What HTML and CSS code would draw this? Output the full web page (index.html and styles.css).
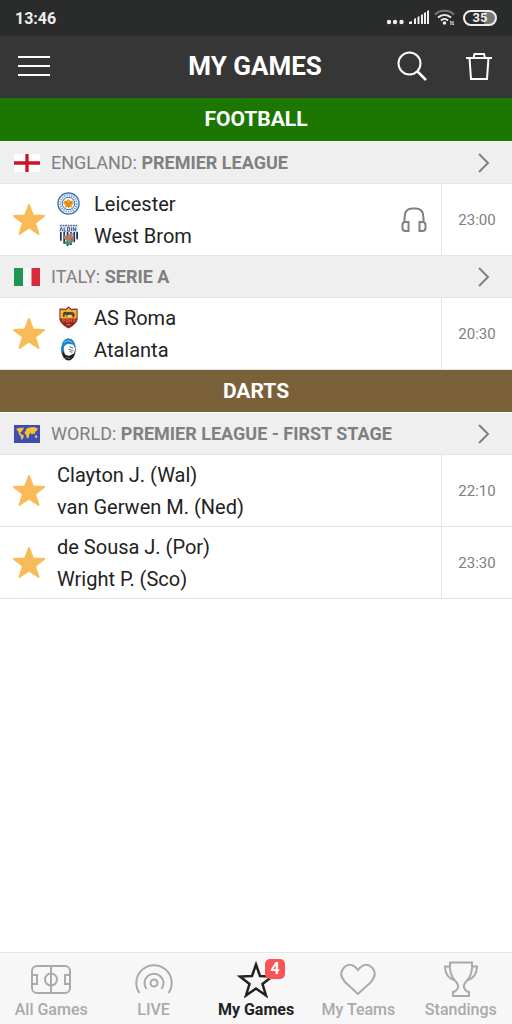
FILE: index.html
```
<!DOCTYPE html>
<html lang="en">
<head>
    <meta charset="UTF-8">
    <meta name="viewport" content="width=device-width, initial-scale=1.0">
    <title>My Games</title>
    <link rel="stylesheet" href="styles.css">
</head>
<body>
    <!-- shared icons -->
    <svg class="sprite" aria-hidden="true">
        <symbol id="star" viewBox="0 0 34 33">
            <path d="M17 2l4 10.500 11 .5-9 7 3.500 11-9.500-6.500L7.500 31 11 20 2 13l11-.5z" fill="#f8bb58" stroke="#f8bb58" stroke-width="2" stroke-linejoin="round"/>
        </symbol>
        <symbol id="chevron" viewBox="0 0 14 22">
            <path d="M2 2l9 9-9 9" fill="none" stroke="#808080" stroke-width="2"/>
        </symbol>
    </svg>

    <div class="app">
        <div class="status">
            <span>13:46</span>
            <div class="status-icons">
                <svg width="18" height="18" viewBox="0 0 18 18" fill="#eee">
                    <circle cx="3" cy="13" r="2.200"/><circle cx="9" cy="13" r="2.200"/><circle cx="15.500" cy="13" r="2.200"/>
                </svg>
                <svg width="22" height="18" viewBox="0 0 22 18" fill="#eee">
                    <path d="M1 15v-2l3-1v3zM6 15v-5l2-1v6zM9.500 15V8l2-1v8zM13 15V6l2-1v10zM16 15V4l2-1v12zM19 15V2l2-1v14z"/>
                </svg>
                <svg width="22" height="18" viewBox="0 0 22 18" fill="none" stroke="#eee" stroke-width="2">
                    <path d="M1 5.500c5-5 14-5 19 0" stroke="#777"/>
                    <path d="M4 8.500c4-3.500 9-3.500 13 0M7 11.500c2-2 5-2 7 0"/>
                    <circle cx="10.500" cy="14" r="1" fill="#eee" stroke-width="1.500"/>
                    <path d="M17 16v-4l-1 1M19 12v4l1-1" stroke-width="1"/>
                </svg>
                <div class="battery">35</div>
            </div>
        </div>

        <header class="header">
            <button class="icon-btn" type="button" aria-label="Menu">
                <svg width="32" height="20" viewBox="0 0 32 20" stroke="#fff" stroke-width="2">
                    <path d="M0 1h32M0 10h32M0 19h32"/>
                </svg>
            </button>
            <h1>MY GAMES</h1>
            <div class="header-actions">
                <button class="icon-btn" type="button" aria-label="Search">
                    <svg width="30" height="30" viewBox="0 0 30 30" fill="none" stroke="#fff" stroke-width="2">
                        <circle cx="12.500" cy="12.500" r="11"/>
                        <path d="M20 20l9 9" stroke-width="2.500"/>
                    </svg>
                </button>
                <button class="icon-btn" type="button" aria-label="Delete">
                    <svg width="26" height="30" viewBox="0 0 26 30" fill="none" stroke="#fff" stroke-width="2">
                        <path d="M0 7h26M7.500 7l1-4h9.500l1 4M3.500 7l1.500 21h16l1.500-21"/>
                    </svg>
                </button>
            </div>
        </header>

        <main>
            <section>
                <h2 class="sport football">FOOTBALL</h2>

                <a class="league" href="#england">
                    <svg class="flag" viewBox="0 0 26 18">
                        <path d="M0 0h26v18H0z" fill="#fff"/>
                        <path d="M13 0v18M0 9h26" stroke="#ce1126" stroke-width="3.300"/>
                    </svg>
                    <span>ENGLAND: <b>PREMIER LEAGUE</b></span>
                    <svg class="chevron"><use href="#chevron"/></svg>
                </a>
                <div class="game">
                    <button class="fav" type="button" aria-label="Remove from my games"><svg><use href="#star"/></svg></button>
                    <div class="teams">
                        <div class="team">
                            <svg class="badge" viewBox="0 0 24 24">
                                <circle cx="12" cy="12" r="11" fill="#fff" stroke="#4777b5" stroke-width="1.500"/>
                                <circle cx="12" cy="12" r="8.500" fill="none" stroke="#7fa2cf" stroke-width="2" stroke-dasharray="1.500 1"/>
                                <circle cx="12" cy="12" r="6.500" fill="#fff" stroke="#2c62aa"/>
                                <path d="M6.500 12l1-3 2.500 0 2-2 2 2 2.500 0 1 3-2 1.500 0 3-2.500-1-1 2-1-2-2.500 1 0-3z" fill="#f49b22"/>
                                <path d="M9 11l2 1M15 11l-2 1M11 14.500h2" stroke="#8b572a"/>
                            </svg>
                            <span>Leicester</span>
                        </div>
                        <div class="team">
                            <svg class="badge" viewBox="0 0 24 24">
                                <path d="M2.500 1h19v14q-1 5-9.500 8.500Q3.500 20 2.500 15z" fill="#fff"/>
                                <path d="M4 8v9.500M7.500 8v12.500M11 8v15M14.500 8v14M18 8v11M21 8v8" stroke="#17346b" stroke-width="1.800"/>
                                <path d="M2.500 1h19v7h-19z" fill="#e6eaf3"/>
                                <path d="M3 1.500h18" stroke="#5b70a0" stroke-width="1.500" stroke-dasharray="2 .7"/>
                                <path d="M3 7.500l1.500-4L6 7.500M7.500 3.500v4h2M11 3.500v4h2v-4zM15 3.500v4M17 7.500v-4l2.500 4v-4" stroke="#2a437a" stroke-width=".9" fill="none"/>
                                <path d="M6 12l5 0 3-3 3 1-1 2 2 3-3 4-4-1-4-3z" fill="#b08066"/>
                                <path d="M8 18l4 1 4-2v3l-4 2.500-4-2z" fill="#3c9b69"/>
                                <path d="M15 15l1.500 3" stroke="#c9473f" stroke-width="1.500"/>
                            </svg>
                            <span>West Brom</span>
                        </div>
                    </div>
                    <svg class="audio" viewBox="0 0 26 26" fill="none" stroke="#808080" stroke-width="2">
                        <path d="M3.500 15v-4Q3.500 1.500 11 1.500h4q7.500 0 7.500 9.500v4"/>
                        <path d="M7.500 15v9H4.500q-3 0-3-3v-3q0-3 3-3zM18.500 15v9h3q3 0 3-3v-3q0-3-3-3z"/>
                    </svg>
                    <time class="time">23:00</time>
                </div>

                <a class="league" href="#italy">
                    <svg class="flag" viewBox="0 0 26 18">
                        <path d="M0 0h26v18H0z" fill="#f8f8f8"/>
                        <path d="M0 0h9v18H0z" fill="#1d9655"/>
                        <path d="M17.500 0H26v18h-8.500z" fill="#d52b3a"/>
                    </svg>
                    <span>ITALY: <b>SERIE A</b></span>
                    <svg class="chevron"><use href="#chevron"/></svg>
                </a>
                <div class="game">
                    <button class="fav" type="button" aria-label="Remove from my games"><svg><use href="#star"/></svg></button>
                    <div class="teams">
                        <div class="team">
                            <svg class="badge" viewBox="0 0 24 24">
                                <path d="M12 1l3 2.500 6-.5v11q-1 5-9 9-8-4-9-9V3l6 .5z" fill="#9e1c2e" stroke="#753327"/>
                                <path d="M12 2l3 2.500 5.500-.5v9h-17V4l5.500.5z" fill="#f5b529"/>
                                <path d="M6 7.500l2-1.500 9 .5 2 3-1 .5v2h-1.500l-1-3-4 .5v2H10V9L8 9v2.500H6.500z" fill="#4d453c"/>
                                <path d="M11 9.500h3v2h-3z" fill="#ddd"/>
                                <path d="M6 17v-3h2v1.500H6.500L8 17M10 14v3h1.500v-3zM13 17v-3l1 1 1-1v3M17 17v-3h1.500v3" fill="none" stroke="#e5762b" stroke-width=".8"/>
                                <path d="M10 19.500h4" stroke="#c98976"/>
                            </svg>
                            <span>AS Roma</span>
                        </div>
                        <div class="team">
                            <svg class="badge" viewBox="0 0 24 24">
                                <ellipse cx="12" cy="12" rx="7.500" ry="11.500" fill="#222"/>
                                <path d="M5 17Q3 1 12 .8 19 1 19.300 10L12 6z" fill="#1687cf"/>
                                <path d="M8 16.500Q5 7 12 6l5 1 2 4-1 5-5 2.500q-4 0-5-2z" fill="#fff"/>
                                <path d="M13 9l4 2M12 11.500l5 2M13 14l3 1" stroke="#5e6971" fill="none"/>
                                <path d="M7 5q4-4 9-.5" stroke="#7fc2ec" fill="none"/>
                                <path d="M9 20.500l5 1" stroke="#777"/>
                            </svg>
                            <span>Atalanta</span>
                        </div>
                    </div>
                    <time class="time">20:30</time>
                </div>
            </section>

            <section>
                <h2 class="sport darts">DARTS</h2>

                <a class="league" href="#world">
                    <svg class="flag" viewBox="0 0 26 18">
                        <path d="M0 0h26v18H0z" fill="#3f4db8"/>
                        <path d="M2 4l3-1 5-.5L9 5 7 7 6 8l2 1.500 2 1-1 3-1.500 1.500-1-4L5 9 4 6zM12 4l3-1.500 5-.5 4 1.500-1 2-1.500 1-1 3-1-1-2 1-1-2-1 1.500-1 4-1.500.500-1-4-1.500-1 .5-2 1-.5zM20.500 11l2-1 1 2-1.500 1.500z" fill="#fbc02d"/>
                    </svg>
                    <span>WORLD: <b>PREMIER LEAGUE - FIRST STAGE</b></span>
                    <svg class="chevron"><use href="#chevron"/></svg>
                </a>
                <div class="game">
                    <button class="fav" type="button" aria-label="Remove from my games"><svg><use href="#star"/></svg></button>
                    <div class="teams">
                        <div class="team">Clayton J. (Wal)</div>
                        <div class="team">van Gerwen M. (Ned)</div>
                    </div>
                    <time class="time">22:10</time>
                </div>
                <div class="game">
                    <button class="fav" type="button" aria-label="Remove from my games"><svg><use href="#star"/></svg></button>
                    <div class="teams">
                        <div class="team">de Sousa J. (Por)</div>
                        <div class="team">Wright P. (Sco)</div>
                    </div>
                    <time class="time">23:30</time>
                </div>
            </section>
        </main>

        <nav class="tabs">
            <a class="tab" href="#all">
                <svg width="42" height="38" viewBox="0 0 42 38">
                    <rect x="2" y="6" width="38" height="27" rx="5"/>
                    <path d="M21 6v27M2 15h5v9H2M40 15h-5v9h5"/>
                    <circle cx="21" cy="19.500" r="6"/>
                </svg>
                <span>All Games</span>
            </a>
            <a class="tab" href="#live">
                <svg width="42" height="38" viewBox="0 0 42 38">
                    <circle cx="21" cy="23" r="3.500"/>
                    <path d="M13.500 29A9.500 9.500 0 1 1 28.500 29M6.500 33A17.700 17.700 0 1 1 35.500 33"/>
                </svg>
                <span>LIVE</span>
            </a>
            <a class="tab active" href="#my">
                <span class="tab-icon">
                    <svg width="42" height="38" viewBox="0 0 42 38">
                        <path d="M21 4.500l4 11.500 12 .5-9.500 7.500 3.500 11.500-10-7-10 7L14.500 24 5 16.500 17 16z" stroke-width="2.500"/>
                    </svg>
                    <span class="count">4</span>
                </span>
                <span>My Games</span>
            </a>
            <a class="tab" href="#teams">
                <svg width="42" height="38" viewBox="0 0 42 38">
                    <path d="M21 34L8 22Q1 14 7 7.500 14 1 21 10q7-9 14-2.500Q41 14 34 22z"/>
                </svg>
                <span>My Teams</span>
            </a>
            <a class="tab" href="#standings">
                <svg width="42" height="38" viewBox="0 0 42 38">
                    <path d="M10 2.500h22q1 12-5 18-5 5-2 9l3 2.500h1v4H13v-4h1l3-2.500q3-4-2-9-6-6-5-18zM10 6.500H5q0 11 10 14M32 6.500h5q0 11-10 14"/>
                </svg>
                <span>Standings</span>
            </a>
        </nav>
    </div>
</body>
</html>
```
FILE: styles.css
```
* {
    box-sizing: border-box;
}

body {
    margin: 0;
    font-family: Roboto, "Liberation Sans", sans-serif;
    background: #fff;
    color: #222;
}

h1, h2 {
    margin: 0;
}

a {
    color: inherit;
    text-decoration: none;
}

button {
    padding: 0;
    border: none;
    background: none;
    cursor: pointer;
}

svg {
    display: block;
    flex-shrink: 0;
}

.sprite {
    position: absolute;
    width: 0;
    height: 0;
}

.app {
    display: flex;
    flex-direction: column;
    min-height: 100vh;
}

main {
    flex: 1;
}

/* phone status bar */
.status {
    display: flex;
    justify-content: space-between;
    align-items: center;
    height: 36px;
    padding: 0 15px;
    background: #2a2c2b;
    color: #eee;
    font-size: 16px;
    font-weight: 700;
}

.status-icons {
    display: flex;
    align-items: center;
    gap: 4px;
}

.battery {
    width: 34px;
    margin-left: 3px;
    border: 2px solid #eee;
    border-radius: 8px;
    background: linear-gradient(to right, #2a2c2b 65%, #777 65%);
    font-size: 13px;
    line-height: 12px;
    text-align: center;
}

.header {
    display: grid;
    grid-template-columns: 1fr auto 1fr;
    align-items: center;
    height: 62px;
    padding: 0 20px 2px 18px;
    background: #363636;
    color: #fff;
}

.header h1 {
    font-size: 26px;
    line-height: 32px;
}

.header-actions {
    display: flex;
    justify-content: flex-end;
    gap: 39px;
}

.sport {
    color: #fff;
    font-size: 21px;
    line-height: 42px;
    text-align: center;
    border-bottom: 1px solid #fff;
}

.football {
    background: #1c7700;
    background-clip: padding-box;
    line-height: 43px;
}

.darts {
    background: #7b6139;
    background-clip: padding-box;
}

.league {
    display: flex;
    align-items: center;
    gap: 11px;
    height: 42px;
    padding: 0 21px 0 14px;
    background: #efefef;
    border-bottom: 1px solid #e4e4e4;
    color: #808080;
    font-size: 18px;
}

.flag {
    width: 26px;
    height: 18px;
}

.chevron {
    width: 14px;
    height: 22px;
    margin-left: auto;
}

.game {
    display: flex;
    align-items: center;
    min-height: 72px;
    border-bottom: 1px solid #e4e4e4;
}

.fav {
    width: 57px;
    padding-left: 12px;
}

.fav svg {
    width: 34px;
    height: 33px;
}

.teams {
    flex: 1;
}

.team {
    display: flex;
    align-items: center;
    gap: 14px;
    font-size: 20px;
    line-height: 32px;
}

.badge {
    width: 23px;
    height: 23px;
}

.audio {
    width: 26px;
    height: 26px;
    margin-right: 14px;
}

.time {
    display: flex;
    align-items: center;
    justify-content: center;
    align-self: stretch;
    width: 71px;
    border-left: 1px solid #e4e4e4;
    color: #808080;
    font-size: 15px;
}

/* bottom tab bar */
.tabs {
    position: sticky;
    bottom: 0;
    display: grid;
    grid-template-columns: repeat(5, 1fr);
    padding: 7px 0 3px;
    background: #f7f7f7;
    border-top: 1px solid #e4e4e4;
}

.tab {
    display: flex;
    flex-direction: column;
    align-items: center;
    color: #aaa;
    font-size: 16px;
    font-weight: 500;
    line-height: 23px;
}

.tab svg {
    fill: none;
    stroke: currentColor;
    stroke-width: 2;
}

.active {
    color: #222;
    font-weight: 700;
}

.tab-icon {
    position: relative;
}

.count {
    position: absolute;
    top: -1px;
    right: -8px;
    width: 20px;
    border-radius: 5px;
    background: #f95355;
    color: #fff;
    line-height: 20px;
    text-align: center;
}
```
